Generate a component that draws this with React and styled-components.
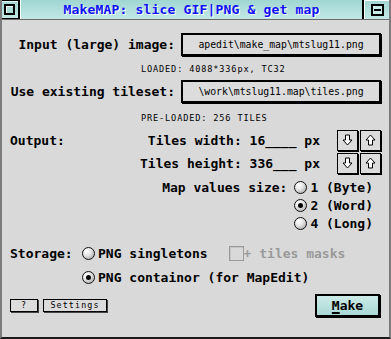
import React from 'react';
import styled, { createGlobalStyle } from 'styled-components';

const GlobalStyle = createGlobalStyle`
  html, body {
    margin: 0;
    padding: 0;
    background: #d9d9d9;
  }
  * { box-sizing: border-box; }
`

const MONO = `"DejaVu Sans Mono", "Liberation Mono", monospace`

const Window = styled.div`
  width: 391px;
  height: 339px;
  background: #d9d9d9;
  border-left: 2px solid #7c7c7c;
  border-right: 2px solid #7c7c7c;
  border-bottom: 2px solid #1a1a1a;
  display: flex;
  flex-direction: column;
  font-family: ${MONO};
  color: #000;
  overflow: hidden;
`

const TitleBar = styled.div`
  height: 20px;
  margin: 0 -2px;
  display: flex;
  border-bottom: 1px solid #6a6a6a;
  background: linear-gradient(#9fd6d2, #c2e8e5);
`

const CloseBox = styled.div`
  width: 20px;
  height: 19px;
  border: 1px solid #000;
  border-right: 2px solid #000;
  box-shadow: inset 1px 1px 0 #e8fbfa;
  display: flex;
  align-items: center;
  justify-content: center;
`

const CloseInner = styled.div`
  width: 11px;
  height: 11px;
  border: 2px solid #000;
  background: #a8dcd8;
  box-shadow: inset 1px 1px 0 #ffffff;
`

const Title = styled.div`
  flex: 1;
  border-left: 1px solid #ffffff;
  text-align: center;
  font-weight: bold;
  font-size: 13px;
  letter-spacing: 0.17px;
  line-height: 19px;
  color: #1010f0;
  text-shadow: 1px 1px 0 #ffffff;
`

const ZoomBox = styled.div`
  width: 29px;
  height: 19px;
  border-left: 2px solid #000;
  box-shadow: inset 1px 1px 0 #ffffff;
  display: flex;
  align-items: center;
  justify-content: center;
`

const ZoomInner = styled.div`
  width: 13px;
  height: 12px;
  border: 2px solid #000;
  background: #c8ecea;
  display: flex;
  align-items: center;
  justify-content: center;
  &::after {
    content: '';
    width: 7px;
    height: 2px;
    background: #000;
  }
`

const Body = styled.div`
  flex: 1;
  padding: 0 8px;
  display: flex;
  flex-direction: column;
`

const FileRow = styled.div`
  margin-top: ${p => p.$top}px;
  display: grid;
  grid-template-columns: 1fr 200px;
  align-items: center;
`

const Label = styled.div`
  font-size: 13px;
  font-weight: bold;
  white-space: pre;
  text-align: ${p => p.$align || 'left'};
  padding-right: ${p => p.$pad || 0}px;
`

const PathBox = styled.div`
  height: 23px;
  border: 2px solid #000;
  box-shadow: 1px 1px 0 #000;
  background: #dcdcdc;
  display: flex;
  align-items: center;
  justify-content: center;
  font-size: 9.8px;
  letter-spacing: 0;
  white-space: pre;
`

const Status = styled.div`
  margin-top: ${p => p.$top}px;
  padding-left: 131px;
  height: 8px;
  line-height: 8px;
  font-size: 8.6px;
  letter-spacing: 0.85px;
  white-space: pre;
`

const SizeRow = styled.div`
  margin-top: ${p => p.$top}px;
  height: 22px;
  display: grid;
  grid-template-columns: auto 1fr auto;
  align-items: center;
`

const Arrows = styled.div`
  display: flex;
  gap: 2px;
  margin-left: 17px;
`

const ArrowButton = styled.div`
  width: 21px;
  height: 21px;
  border: 1px solid #000;
  box-shadow: 1px 1px 0 #000;
  background: #dcdcdc;
  display: flex;
  align-items: center;
  justify-content: center;
`

const ValuesGrid = styled.div`
  margin-top: ${p => p.$top}px;
  padding-right: 8px;
  display: grid;
  grid-template-columns: 1fr auto;
  grid-auto-rows: 18px;
  align-items: center;
  column-gap: 7px;
`

const RadioItem = styled.div`
  display: flex;
  align-items: center;
  gap: 3px;
  font-size: 13px;
  font-weight: bold;
  white-space: pre;
  color: ${p => (p.$dim ? '#9a9a9a' : '#000')};
`

const RadioDot = styled.span`
  width: 13px;
  height: 13px;
  border-radius: 50%;
  border: 1px solid #111;
  background: radial-gradient(circle at 35% 30%, #ffffff 0%, #e6e6e6 40%, #9a9a9a 100%);
  display: flex;
  align-items: center;
  justify-content: center;
  flex-shrink: 0;
  &::after {
    content: '';
    display: ${p => (p.$on ? 'block' : 'none')};
    width: 5px;
    height: 5px;
    border-radius: 50%;
    background: #000;
  }
`

const StorageRow = styled.div`
  margin-top: ${p => p.$top}px;
  height: 22px;
  display: grid;
  grid-template-columns: 72px auto;
  align-items: center;
`

const Options = styled.div`
  display: flex;
  align-items: center;
`

const Check = styled.span`
  width: 15px;
  height: 15px;
  margin-left: 21px;
  border: 1px solid #9a9a9a;
  background: #d9d9d9;
  box-shadow: inset 1px 1px 0 #c4c4c4;
  flex-shrink: 0;
`

const BottomRow = styled.div`
  margin-top: ${p => p.$top}px;
  height: 24px;
  display: flex;
  align-items: center;
  justify-content: space-between;
`

const SmallButtons = styled.div`
  display: flex;
  gap: 5px;
`

const SmallButton = styled.div`
  width: ${p => p.$w}px;
  height: 13px;
  border: 1px solid #000;
  box-shadow: 1px 1px 0 #444;
  background: #dcdcdc;
  font-size: 8.4px;
  letter-spacing: 1.1px;
  line-height: 11px;
  text-align: center;
`

const MakeButton = styled.div`
  width: 65px;
  height: 23px;
  margin-right: 1px;
  border: 2px solid #000;
  box-shadow: 1px 1px 0 #000;
  background: linear-gradient(#cdebe8, #a9d9d5);
  display: flex;
  align-items: center;
  justify-content: center;
  font-size: 13px;
  font-weight: bold;
  u { text-underline-offset: 2px; text-decoration-thickness: 2px; }
`

const Arrow = ({ up }) => (
  <svg width="11" height="12" viewBox="0 0 11 12">
    <path
      d={up
        ? 'M5.5 1 L10 6 L7.5 6 L7.5 11 L3.5 11 L3.5 6 L1 6 Z'
        : 'M5.5 11 L10 6 L7.5 6 L7.5 1 L3.5 1 L3.5 6 L1 6 Z'}
      fill="#fff"
      stroke="#000"
      strokeWidth="1"
      strokeLinejoin="miter"
    />
  </svg>
)

const SizeField = ({ label, text }) => (
  <SizeRow $top={label ? 7 : 1}>
    <Label>{label}</Label>
    <Label $align="right">{text}</Label>
    <Arrows>
      <ArrowButton><Arrow /></ArrowButton>
      <ArrowButton><Arrow up /></ArrowButton>
    </Arrows>
  </SizeRow>
)

export default function App() {
  return (
    <>
      <GlobalStyle />
      <Window>
        <TitleBar>
          <CloseBox><CloseInner /></CloseBox>
          <Title>MakeMAP: slice GIF|PNG &amp; get map</Title>
          <ZoomBox><ZoomInner /></ZoomBox>
        </TitleBar>
        <Body>
          <FileRow $top={13}>
            <Label $align="right" $pad={6}>Input (large) image:</Label>
            <PathBox>apedit\make_map\mtslug11.png</PathBox>
          </FileRow>
          <Status $top={9}>LOADED: 4088*336px, TC32</Status>

          <FileRow $top={7}>
            <Label $align="right" $pad={6}>Use existing tileset:</Label>
            <PathBox>\work\mtslug11.map\tiles.png</PathBox>
          </FileRow>
          <Status $top={11}>PRE-LOADED: 256 TILES</Status>

          <SizeField label="Output:" text="Tiles width: 16____ px" />
          <SizeField text="Tiles height: 336___ px" />

          <ValuesGrid $top={4}>
            <Label $align="right">Map values size:</Label>
            <RadioItem><RadioDot />1 (Byte)</RadioItem>
            <span />
            <RadioItem><RadioDot $on />2 (Word)</RadioItem>
            <span />
            <RadioItem><RadioDot />4 (Long)</RadioItem>
          </ValuesGrid>

          <StorageRow $top={10}>
            <Label>Storage:</Label>
            <Options>
              <RadioItem><RadioDot />PNG singletons</RadioItem>
              <Check />
              <RadioItem $dim>+ tiles masks</RadioItem>
            </Options>
          </StorageRow>
          <StorageRow $top={2}>
            <span />
            <Options>
              <RadioItem><RadioDot $on />PNG containor (for MapEdit)</RadioItem>
            </Options>
          </StorageRow>

          <BottomRow $top={5}>
            <SmallButtons>
              <SmallButton $w={28}>?</SmallButton>
              <SmallButton $w={64}>Settings</SmallButton>
            </SmallButtons>
            <MakeButton><u>M</u>ake</MakeButton>
          </BottomRow>
        </Body>
      </Window>
    </>
  );
}
